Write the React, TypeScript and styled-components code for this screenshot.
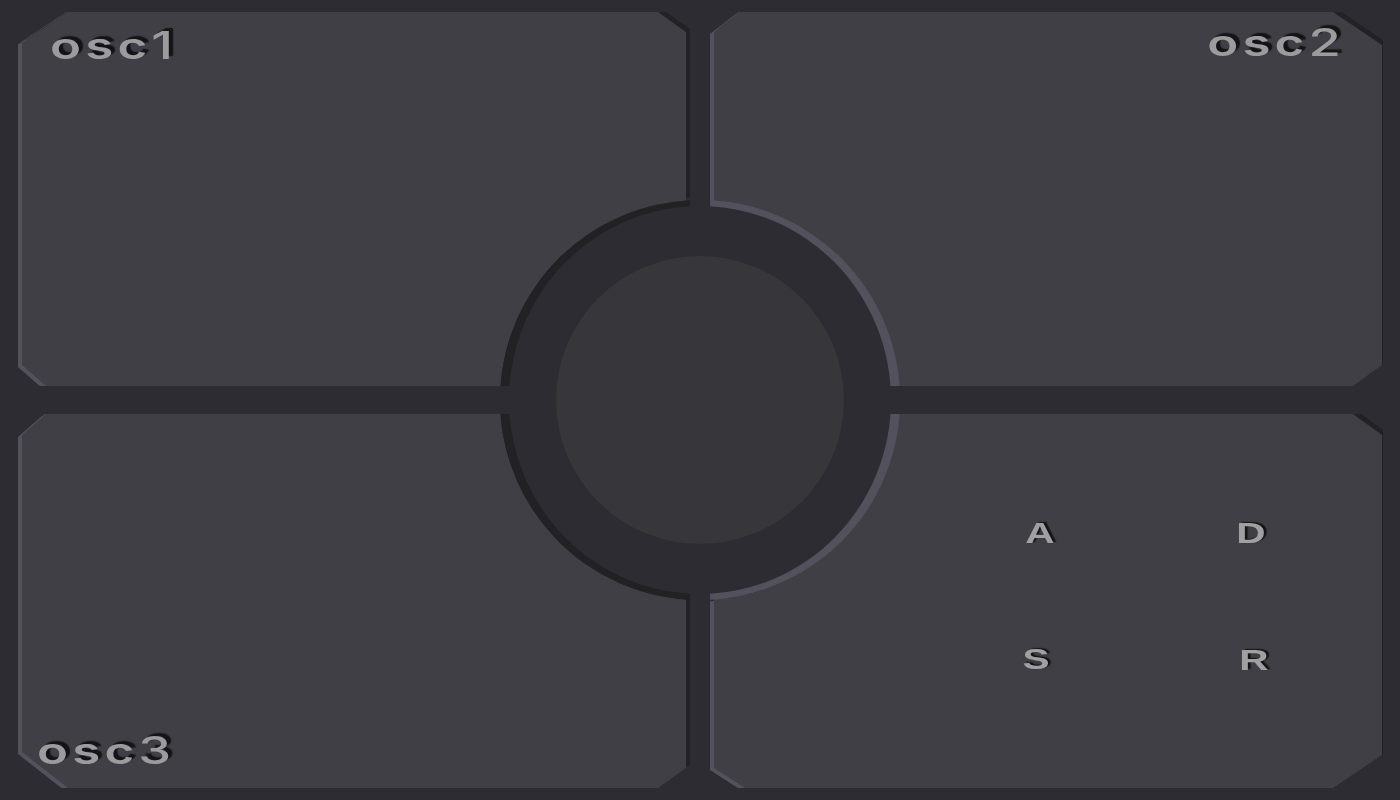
import React from "react"
import styled, { createGlobalStyle } from "styled-components"

const GlobalStyle = createGlobalStyle`
  html, body {
    margin: 0;
    padding: 0;
    background: #2d2c32;
  }
`

const Board = styled.div`
  position: relative;
  width: 1400px;
  height: 800px;
  box-sizing: border-box;
  padding: 12px 18px;
  display: grid;
  grid-template-columns: 672px 672px;
  grid-template-rows: 374px 374px;
  column-gap: 20px;
  row-gap: 28px;
  background: #2d2c32;
  overflow: hidden;
`

// clips the bevel shadows at top and bottom, so only the sides and chamfers show
const Cell = styled.div`
  position: relative;
  clip-path: inset(0 0 0 0);
`

const OuterCell = styled(Cell)`
  clip-path: inset(0 -1px 0 0);
`

const Bevel = styled.div`
  width: 100%;
  height: 100%;
  filter: drop-shadow(4px -2.6px 0.6px #222126) drop-shadow(-4px 2.6px 0.6px #53525c);
`

const Panel = styled.section<{ $shape: string; $justify: string; $align: string; $pad: string }>`
  width: 100%;
  height: 100%;
  box-sizing: border-box;
  background: #403f45;
  clip-path: path("${({ $shape }) => $shape}");
  display: flex;
  justify-content: ${({ $justify }) => $justify};
  align-items: ${({ $align }) => $align};
  padding: ${({ $pad }) => $pad};
`

const Rim = styled.div<{ $x: number; $y: number; $color: string }>`
  position: absolute;
  left: ${({ $x }) => $x - 200}px;
  top: ${({ $y }) => $y - 200}px;
  width: 400px;
  height: 400px;
  box-sizing: border-box;
  border-radius: 50%;
  border-style: solid;
  border-width: 6px 9px;
  border-color: ${({ $color }) => $color};
  background: #2d2c32;
`

const Hub = styled.div`
  position: absolute;
  left: 556px;
  top: 256px;
  width: 288px;
  height: 288px;
  border-radius: 50%;
  background: #37363b;
`

const Label = styled.div<{ $origin: string }>`
  display: flex;
  align-items: baseline;
  color: #9c9c9e;
  font-family: Inter, "Liberation Sans", sans-serif;
  line-height: 30px;
  text-shadow: 3px -3px 1px #141317;
  transform: scaleX(1.38);
  transform-origin: ${({ $origin }) => $origin};
`

const LabelWord = styled.span`
  font-size: 37px;
  font-weight: 600;
  letter-spacing: 3px;
`

const LabelDigit = styled.span`
  font-size: 38px;
  font-weight: 500;
`

const AdsrGrid = styled.div`
  display: grid;
  grid-template-columns: 60px 60px;
  grid-template-rows: 40px 40px;
  column-gap: 153px;
  row-gap: 86px;
`

const AdsrKey = styled.span<{ $dx: number; $dy: number }>`
  display: block;
  text-align: center;
  color: #a0a0a2;
  font-family: "Liberation Sans", Arial, sans-serif;
  font-weight: 700;
  font-size: 29px;
  line-height: 40px;
  text-shadow: 2px -1px 1px #141317;
  transform: translate(${({ $dx }) => $dx}px, ${({ $dy }) => $dy}px) scaleX(1.4);
`

const SHAPES = {
  osc1: "M50 0 L640 0 L668 20 L668 188.5 A200 200 0 0 0 482.5 374 L28 374 L4 353 L4 30.4 Z",
  osc2: "M30 0 L623 0 L672 33 L672 353 L643 374 L189.5 374 A200 200 0 0 0 4 188.5 L4 20 Z",
  osc3: "M28 0 L482.5 0 A200 200 0 0 0 668 185.5 L668 354 L640 374 L50 374 L4 338 L4 21 Z",
  adsr: "M189.5 0 L643 0 L672 21 L672 341 L623 374 L35 374 L4 354 L4 185.5 A200 200 0 0 0 189.5 0 Z",
}

const LIGHT = "#53525c"
const DARK = "#222126"

const ADSR = [
  { key: "A", dx: 3, dy: -1 },
  { key: "D", dx: 1, dy: -1 },
  { key: "S", dx: -1, dy: -1 },
  { key: "R", dx: 4, dy: 0 },
]

const App = () => (
  <Board>
    <GlobalStyle />
    <Cell>
      <Bevel>
        <Panel $shape={SHAPES.osc1} $justify="flex-start" $align="flex-start" $pad="18px 0 0 32px">
          <Label $origin="left center">
            <LabelWord>osc</LabelWord>
            <LabelDigit>1</LabelDigit>
          </Label>
        </Panel>
      </Bevel>
      <Rim $x={682} $y={388} $color={DARK} />
    </Cell>
    <OuterCell>
      <Bevel>
        <Panel $shape={SHAPES.osc2} $justify="flex-end" $align="flex-start" $pad="15px 41px 0 0">
          <Label $origin="right center">
            <LabelWord>osc</LabelWord>
            <LabelDigit>2</LabelDigit>
          </Label>
        </Panel>
      </Bevel>
      <Rim $x={-10} $y={388} $color={LIGHT} />
    </OuterCell>
    <Cell>
      <Bevel>
        <Panel $shape={SHAPES.osc3} $justify="flex-start" $align="flex-end" $pad="0 0 22px 19px">
          <Label $origin="left center">
            <LabelWord>osc</LabelWord>
            <LabelDigit>3</LabelDigit>
          </Label>
        </Panel>
      </Bevel>
      <Rim $x={682} $y={-14} $color={DARK} />
    </Cell>
    <OuterCell>
      <Bevel>
        <Panel $shape={SHAPES.adsr} $justify="flex-end" $align="flex-start" $pad="100px 102px 0 0">
          <AdsrGrid>
            {ADSR.map(({ key, dx, dy }) => (
              <AdsrKey key={key} $dx={dx} $dy={dy}>
                {key}
              </AdsrKey>
            ))}
          </AdsrGrid>
        </Panel>
      </Bevel>
      <Rim $x={-10} $y={-14} $color={LIGHT} />
    </OuterCell>
    <Hub />
  </Board>
)

export default App
